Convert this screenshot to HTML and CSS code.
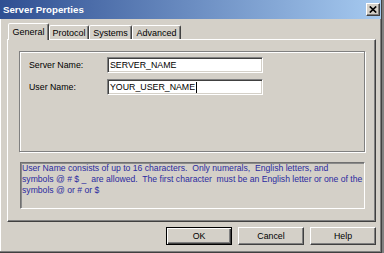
FILE: index.html
```html
<!DOCTYPE html>
<html>
<head>
<meta charset="utf-8">
<link rel="stylesheet" href="styles.css">
</head>
<body>
<div class="window">
  <div class="titlebar">
    <span class="title">Server Properties</span>
    <span class="close"><svg width="8" height="7" viewBox="0 0 8 7"><path d="M0.8 0.5 L7.2 6.5 M7.2 0.5 L0.8 6.5" stroke="#000" stroke-width="1.7" fill="none"/></svg></span>
  </div>
  <div class="body">
    <div class="tabs">
      <div class="tab active t-general">General</div>
      <div class="tab t-protocol">Protocol</div>
      <div class="tab t-systems">Systems</div>
      <div class="tab t-advanced">Advanced</div>
    </div>
    <div class="panel">
      <div class="group">
        <div class="row"><span class="label">Server Name:</span><span class="input">SERVER_NAME</span></div>
        <div class="row"><span class="label">User Name:</span><span class="input">YOUR_USER_NAME<span class="caret"></span></span></div>
      </div>
      <div class="desc">User Name consists of up to 16 characters.  Only numerals,  English letters, and
symbols @ # $ _  are allowed.  The first character  must be an English letter or one of the
symbols @ or # or $</div>
    </div>
    <div class="buttons">
      <div class="btn default">OK</div>
      <div class="btn">Cancel</div>
      <div class="btn">Help</div>
    </div>
  </div>
</div>
</body>
</html>
```
FILE: styles.css
```css
* { box-sizing: border-box; margin: 0; padding: 0; }
html, body { width: 384px; height: 253px; overflow: hidden; }
body {
  background: #808080;
  font-family: "Liberation Sans", Arial, sans-serif;
  font-size: 8.8px;
  color: #000;
}
.window {
  width: 382px;
  height: 253px;
  background: #d4d0c8;
  border-right: 1px solid #404040;
  border-bottom: 1px solid #404040;
  box-shadow: inset -1px -1px 0 #808080, inset 1px 0 0 #fff;
  display: flex;
  flex-direction: column;
}
.titlebar {
  height: 19px;
  width: 381px;
  display: flex;
  align-items: center;
  justify-content: space-between;
  background: linear-gradient(to right, #2f4f92, #a6caf0);
  padding: 0 1px 0 3px;
}
.title { color: #fff; font-weight: bold; font-size: 9.7px; }
.close {
  width: 14px;
  height: 13px;
  background: #d4d0c8;
  border: 1px solid;
  border-color: #fff #404040 #404040 #fff;
  box-shadow: inset -1px -1px 0 #808080;
  display: flex;
  align-items: center;
  justify-content: center;
}
.close svg { display: block; }
.body {
  flex: 1;
  padding: 4px 0 0 7px;
  display: flex;
  flex-direction: column;
}
.tabs {
  display: flex;
  align-items: flex-end;
  height: 17px;
  margin: 0 0 -1px 1px;
  position: relative;
  z-index: 1;
}
.tab {
  height: 14px;
  margin-bottom: 1px;
  border: 1px solid;
  border-bottom: 0;
  border-color: #fff #404040 transparent #fff;
  border-radius: 2px 2px 0 0;
  box-shadow: inset -1px 0 0 #808080;
  display: flex;
  align-items: center;
  justify-content: center;
  padding-top: 1px;
  font-size: 9px;
  background: #d4d0c8;
}
.tab.active { height: 17px; margin-bottom: 0; padding-top: 0; padding-bottom: 1px; }
.t-general { width: 41px; }
.t-protocol { width: 40px; }
.t-systems { width: 43px; }
.t-advanced { width: 49px; }
.panel {
  width: 369px;
  height: 183px;
  border: 1px solid;
  border-color: #fff #404040 #404040 #fff;
  box-shadow: inset -1px -1px 0 #808080;
  padding: 11px 0 0 11px;
}
.group {
  width: 346px;
  height: 101px;
  border: 1px solid #808080;
  box-shadow: inset 1px 1px 0 #fff, 1px 1px 0 #fff;
  padding: 5px 0 0 9px;
  display: flex;
  flex-direction: column;
  gap: 6px;
}
.row { display: flex; align-items: center; height: 16px; }
.label { width: 78px; }
.input {
  width: 156px;
  height: 16px;
  background: #fff;
  border: 1px solid;
  border-color: #808080 #fff #fff #808080;
  box-shadow: inset 1px 1px 0 #404040, inset -1px -1px 0 #d4d0c8;
  padding-left: 2px;
  display: flex;
  align-items: center;
  white-space: nowrap;
}
.caret { display: inline-block; width: 1px; height: 11px; background: #000; margin-left: 1px; }
.desc {
  width: 345px;
  height: 47px;
  margin: 10px 0 0 1px;
  border: 1px solid;
  border-color: #707070 #fff #fff #707070;
  box-shadow: inset 1px 1px 0 #8a8a8a;
  padding: 0 0 0 1px;
  color: #2b2ba0;
  font-size: 8.65px;
  line-height: 11px;
  white-space: pre;
  overflow: hidden;
}
.buttons {
  display: flex;
  justify-content: flex-end;
  gap: 6px;
  width: 369px;
  margin-top: 5px;
}
.btn {
  width: 66px;
  height: 18px;
  border: 1px solid;
  border-color: #fff #404040 #404040 #fff;
  box-shadow: inset -1px -1px 0 #808080;
  display: flex;
  align-items: center;
  justify-content: center;
}
.btn.default {
  border-color: #000;
  box-shadow: inset 1px 1px 0 #fff, inset -1px -1px 0 #404040, inset -2px -2px 0 #808080;
}
```
